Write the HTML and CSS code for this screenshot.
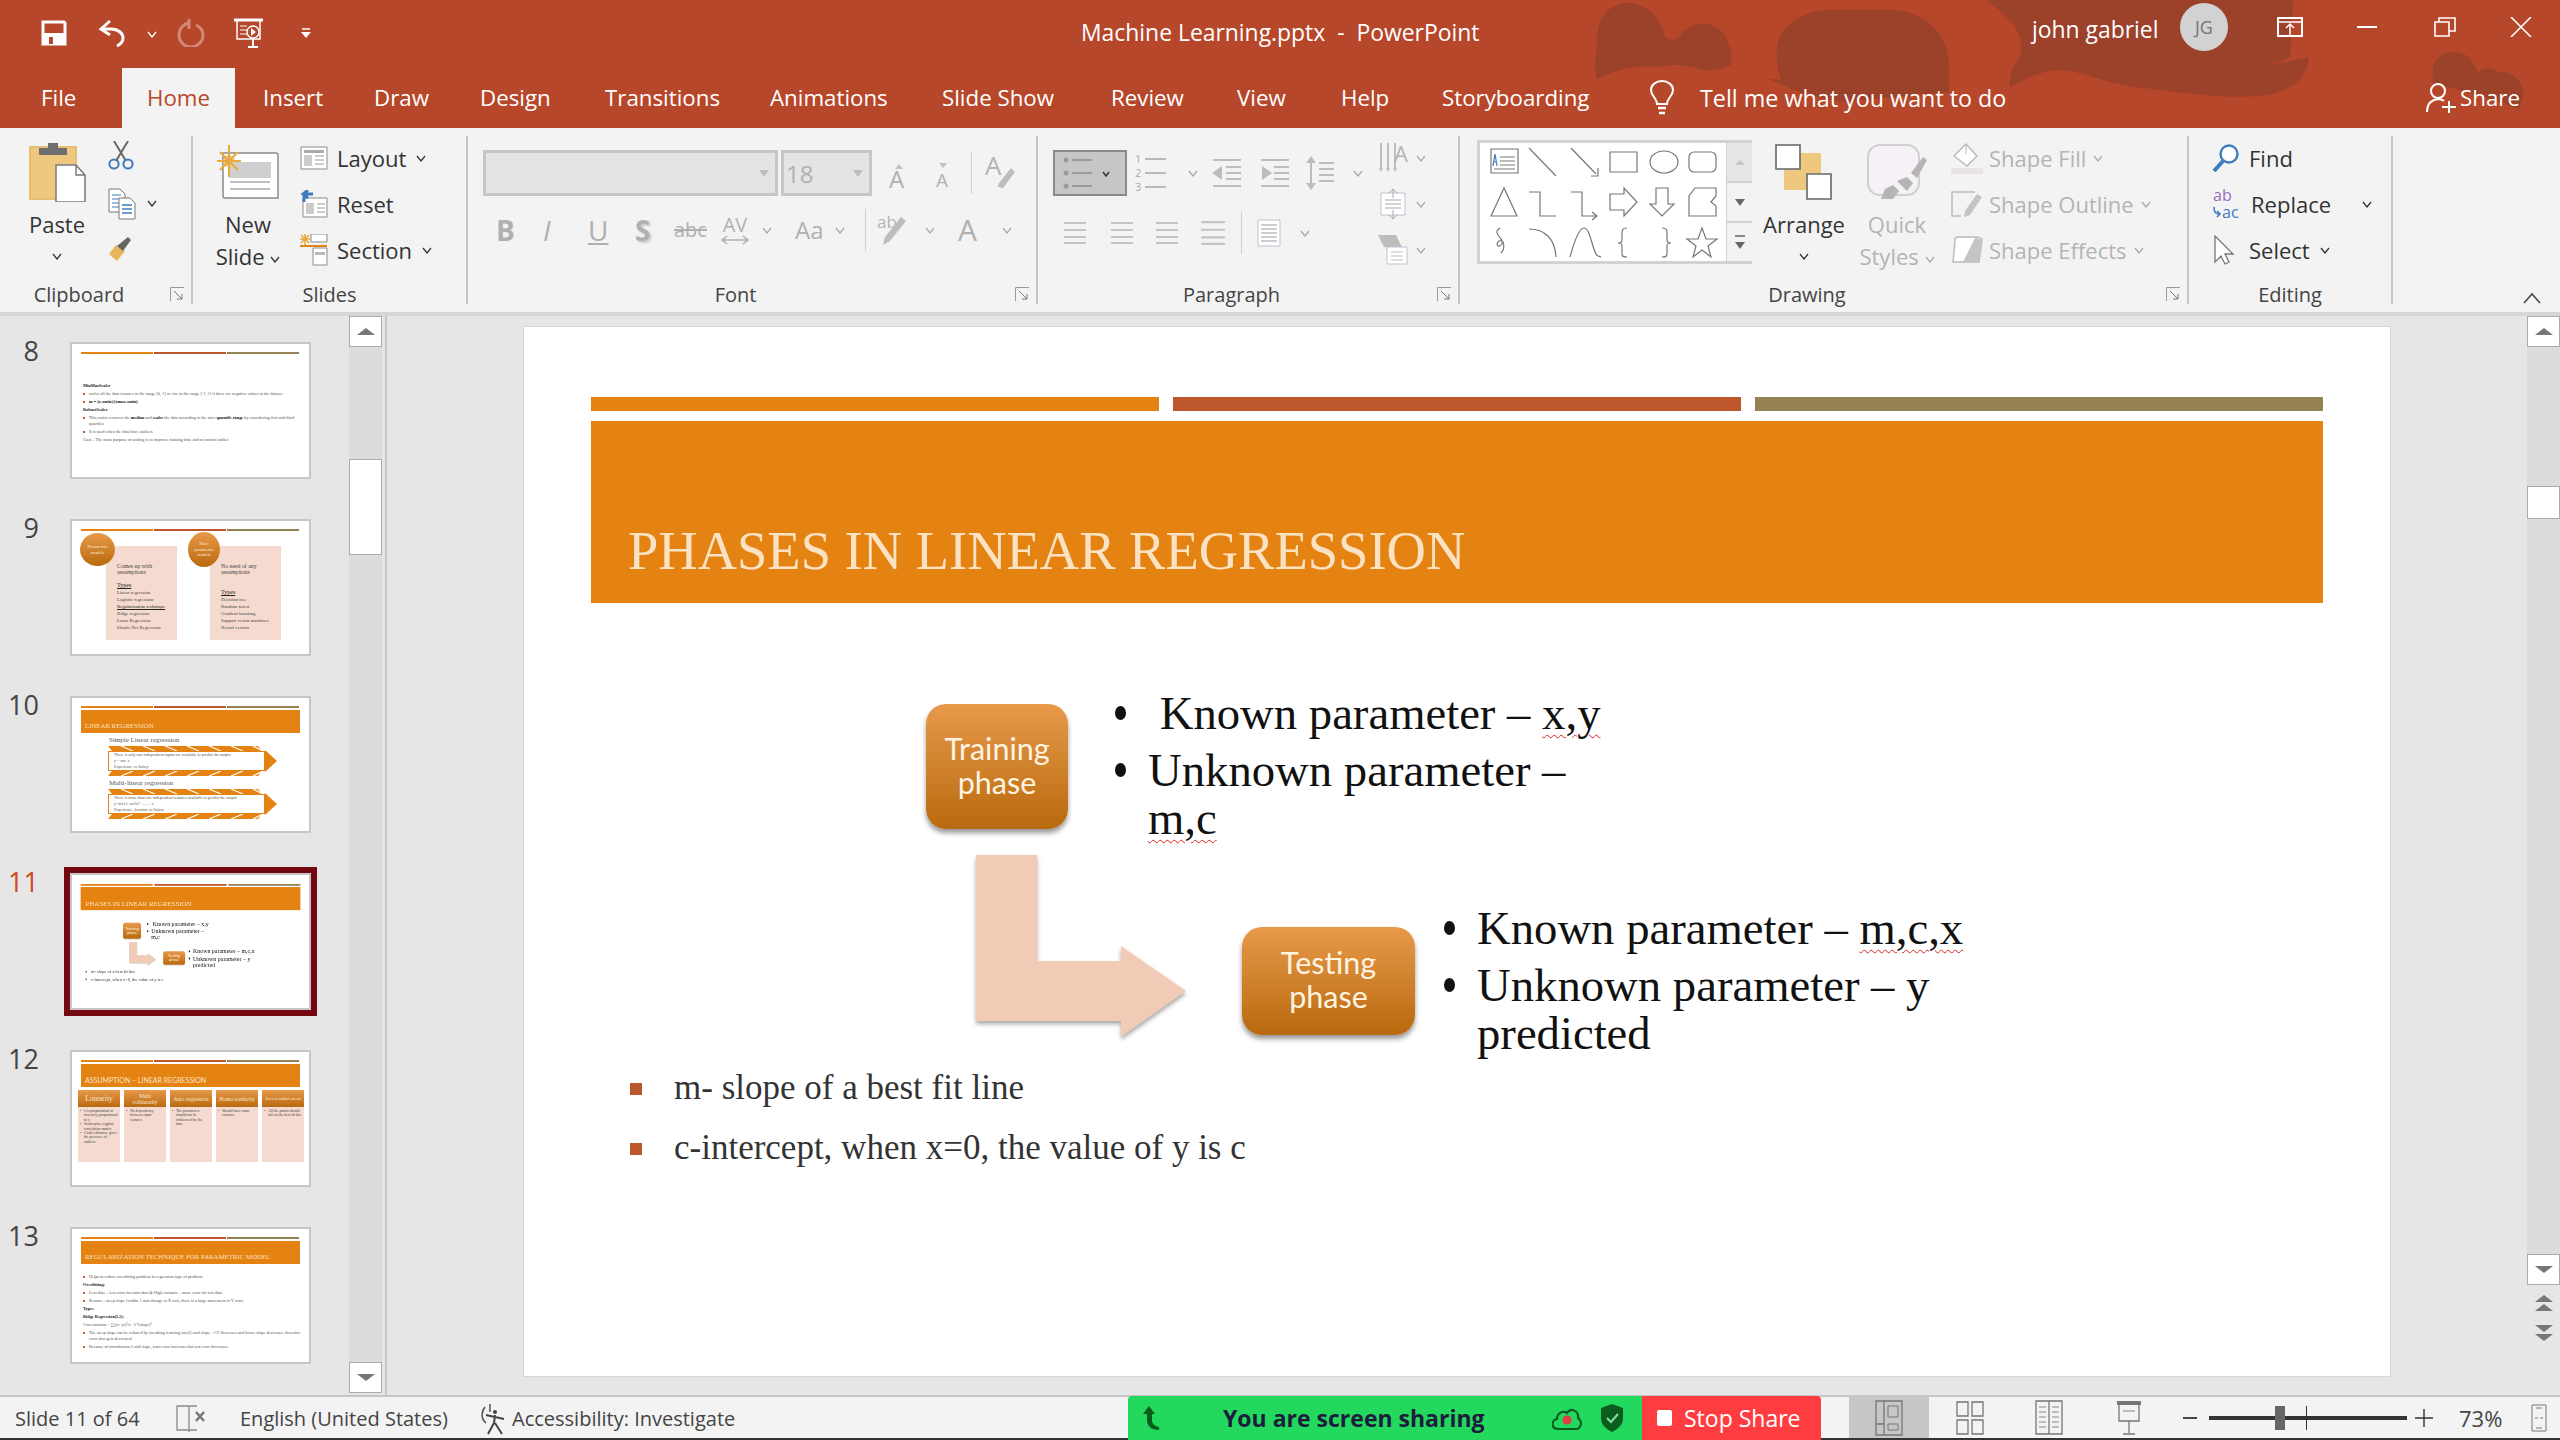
FILE: index.html
```html
<!DOCTYPE html>
<html lang="en">
<head>
<meta charset="utf-8">
<title>Machine Learning.pptx - PowerPoint</title>
<link rel="stylesheet" href="styles.css">
</head>
<body>
<svg class="sprite" width="0" height="0">
  <symbol id="chev" viewBox="0 0 10 7"><path d="M1 1l4 5 4-5" fill="none" stroke="currentColor" stroke-width="1.3"/></symbol>
  <symbol id="launch" viewBox="0 0 15 15"><path d="M.5 14V.5H14" fill="none" stroke="#9a9a9a"/><path d="M4 4l8 8M12 7v5H7" fill="none" stroke="#777"/></symbol>
  <symbol id="band" viewBox="0 0 170 30"><path d="M1 0h150l4 5h3v-1l12 11-12 11v-1h-3l-4 5H1l4-5v-4L1 15l4-4V5z" fill="#e48312"/><path d="M14 0l12 5M36 0l12 5M58 0l12 5M80 0l12 5M102 0l12 5M124 0l12 5M146 0l10 5M14 30l12-5M36 30l12-5M58 30l12-5M80 30l12-5M102 30l12-5M124 30l12-5M146 30l10-5" stroke="#fff" stroke-width="1.2"/></symbol>
  <symbol id="lines" viewBox="0 0 24 22"><path d="M1 1h22M1 8h22M1 15h22M1 21h22" stroke="#c4c4c4" stroke-width="2"/></symbol>
</svg>

<div class="app">
  <header class="head">
    <svg class="blobs" viewBox="0 0 2560 128" width="2560" height="128">
      <path d="M1597 40c0-24 14-38 32-37 20 1 34 18 36 34 6 4 10 4 14 0 6-10 20-16 32-12 16 6 22 22 20 40-10 4-22 8-32 4-20-6-30-4-40-2-16-2-36 0-62 12-4-12 0-26 0-39z"/>
      <path d="M1777 60c-4-30 20-48 50-50h62c36 0 60 24 60 56l0 26c-30 2-60 6-106 10-36-6-60-16-76-24l14 2c-2-6-4-14-4-20z"/>
      <path d="M1987 0h306l-3 57c-26 12-56 14-80 10 34 4 70-4 99-10-2 20-14 32-41 38-50 6-90-4-134-8-40-6-60-22-89-15-16 4-26 10-35 16-2-10 2-20 10-32 6-16-6-32-11-36-6-8-14-12-22-20z"/>
      <path d="M2434 84c-4-16 0-32 22-32 12 0 18 12 22 20 6-6 14-4 20 0 8-2 22 4 25 18 1 6-2 14-4 19-30-12-54-18-85-25z"/>
    </svg>
    <div class="titlebar">
      <div class="qat">
        <svg width="26" height="26" viewBox="0 0 26 26"><path d="M2 2h21l1 1v21H2z" fill="none" stroke="#fff" stroke-width="3"/><path d="M2 13h22v12H2z" fill="#fff"/><path d="M8 17h4v7H8z" fill="#b7472a"/></svg>
        <svg width="28" height="28" viewBox="0 0 28 28"><path d="M12 2L3 10l9 6" fill="none" stroke="#fff" stroke-width="3"/><path d="M3 10h10c8 0 12 5 12 9 0 4-2 6-6 8" fill="none" stroke="#fff" stroke-width="3"/></svg>
        <svg class="qchev" width="10" height="7"><use href="#chev"/></svg>
        <svg class="dim" width="28" height="28" viewBox="0 0 28 28"><path d="M19 6c4 2 7 5 7 10a12 12 0 1 1-24 0c0-6 4-11 10-12" fill="none" stroke="#fff" stroke-width="3"/><path d="M12 0v10" stroke="#fff" stroke-width="3"/></svg>
        <svg width="32" height="30" viewBox="0 0 32 30"><path d="M1 2h29" stroke="#fff" stroke-width="3"/><path d="M4 3v18h23V3" fill="none" stroke="#fff" stroke-width="1.5"/><path d="M7 8h7M7 12h7M7 16h7" stroke="#fff"/><circle cx="20" cy="14" r="6" fill="none" stroke="#fff" stroke-width="1.5"/><path d="M18 10l5 4-5 4z" fill="#fff"/><path d="M15 29h10M20 21v8" stroke="#fff" stroke-width="2"/></svg>
        <svg width="10" height="10" viewBox="0 0 10 10"><path d="M1 1h8" stroke="#fff" stroke-width="1.5"/><path d="M0 4h10L5 10z" fill="#fff"/></svg>
      </div>
      <div class="doc-title">Machine Learning.pptx &nbsp;-&nbsp; PowerPoint</div>
      <div class="user">john gabriel</div>
      <div class="avatar">JG</div>
      <div class="winctl">
        <svg width="26" height="20" viewBox="0 0 26 20"><path d="M1 1h24v18H1z" fill="none" stroke="#fff" stroke-width="2"/><path d="M1 5h24M13 18V8M9 11l4-4 4 4" fill="none" stroke="#fff" stroke-width="1.5"/></svg>
        <svg width="20" height="2" viewBox="0 0 20 2"><path d="M0 1h20" stroke="#fff" stroke-width="2"/></svg>
        <svg width="22" height="20" viewBox="0 0 22 20"><path d="M1 5h14v14H1zM5 5V1h16v13h-6" fill="none" stroke="#fff" stroke-width="1.6"/></svg>
        <svg width="22" height="20" viewBox="0 0 22 20"><path d="M1 0l20 20M21 0L1 20" stroke="#fff" stroke-width="1.6"/></svg>
      </div>
    </div>
    <nav class="tabs">
      <div class="tab tab-file">File</div>
      <div class="tab tab-home">Home</div>
      <div class="tab">Insert</div>
      <div class="tab">Draw</div>
      <div class="tab">Design</div>
      <div class="tab">Transitions</div>
      <div class="tab">Animations</div>
      <div class="tab">Slide Show</div>
      <div class="tab">Review</div>
      <div class="tab">View</div>
      <div class="tab">Help</div>
      <div class="tab">Storyboarding</div>
      <div class="tell">
        <svg width="26" height="36" viewBox="0 0 26 36"><path d="M8 24c0-6-6-8-6-14a11 9 0 0 1 22 0c0 6-6 8-6 14z" fill="none" stroke="#fff" stroke-width="2"/><path d="M9 28h8M10 33h6" stroke="#fff" stroke-width="2.4"/></svg>
        <span>Tell me what you want to do</span>
      </div>
      <div class="share">
        <svg width="32" height="32" viewBox="0 0 32 32"><circle cx="12" cy="9" r="7" fill="none" stroke="#fff" stroke-width="2"/><path d="M1 30c0-8 4-12 11-13 3 0 5 1 6 2" fill="none" stroke="#fff" stroke-width="2"/><path d="M23 19v12M16 25h14" stroke="#fff" stroke-width="2"/></svg>
        <span>Share</span>
      </div>
    </nav>
  </header>

  <section class="ribbon">
    <div class="group g-clip">
      <div class="gbody">
        <div class="big b-paste">
          <div class="big-icon">
            <svg width="58" height="60" viewBox="0 0 58 60"><path d="M2 5h46v52H2z" fill="#edc87e" stroke="#e8bf70" stroke-width="2" stroke-linejoin="round"/><path d="M11 13V6h9V1h10v5h9v7z" fill="#6e6e6e"/><path d="M28 23h20l9 10v27H28z" fill="#fff" stroke="#7a7a7a" stroke-width="1.5"/><path d="M48 23v10h9" fill="none" stroke="#7a7a7a" stroke-width="1.5"/></svg>
          </div>
          <div class="big-label">Paste</div>
          <svg class="big-chev" width="10" height="7"><use href="#chev"/></svg>
        </div>
        <div class="clip-side">
          <svg width="26" height="29" viewBox="0 0 26 29"><path d="M6 0l12 20M20 0L8 20" stroke="#666" stroke-width="2"/><circle cx="6" cy="23" r="4.6" fill="none" stroke="#3f7cbe" stroke-width="2"/><circle cx="20" cy="23" r="4.6" fill="none" stroke="#3f7cbe" stroke-width="2"/></svg>
          <div class="copy-row">
            <svg width="28" height="32" viewBox="0 0 28 32"><path d="M1 1h11l5 5v18H1z" fill="#fff" stroke="#777"/><path d="M4 7h9M4 11h9M4 15h9M4 19h9" stroke="#3f7cbe"/><path d="M11 10h11l5 5v16H11z" fill="#fff" stroke="#777"/><path d="M14 17h10M14 21h10M14 25h10" stroke="#3f7cbe" stroke-width="1.5"/></svg>
            <svg class="ch" width="10" height="7"><use href="#chev"/></svg>
          </div>
          <svg width="26" height="24" viewBox="0 0 26 24"><path d="M8 8L1 17l8 7 8-10z" fill="#e7b75c"/><path d="M9 9l6 5 8-11-3-3z" fill="#666"/></svg>
        </div>
      </div>
      <div class="glabel">Clipboard<svg class="launcher" width="15" height="15"><use href="#launch"/></svg></div>
    </div>

    <div class="group g-slides">
      <div class="gbody">
        <div class="big b-new">
          <div class="big-icon">
            <svg width="62" height="56" viewBox="0 0 62 56"><path d="M6 9h53q2 0 2 2v43H8q-2 0-2-2z" fill="#fff" stroke="#8b8b8b" stroke-width="1.5"/><path d="M12 18h42v16H12z" fill="#cfcfcf"/><path d="M13 38h40M13 45h40" stroke="#aaa" stroke-width="1.5"/><circle cx="12" cy="17" r="6" fill="#edc87e"/><path d="M12 1v32M0 17h24M3 8l18 18M21 8L3 26" stroke="#e9a93f" stroke-width="2"/></svg>
          </div>
          <div class="big-label">New</div>
          <div class="big-label">Slide <svg class="ch" width="10" height="7"><use href="#chev"/></svg></div>
        </div>
        <div class="stack">
          <div class="srow">
            <svg class="sic" width="28" height="24" viewBox="0 0 28 24"><path d="M1 1h26v22H1z" fill="#fff" stroke="#8b8b8b"/><path d="M4 4h20v3H4z" fill="#aaa"/><path d="M4 9h8v11H4z" fill="#ccc"/><path d="M15 10h9M15 14h9M15 18h9" stroke="#999"/></svg>
            <span>Layout</span><svg class="ch" width="10" height="7"><use href="#chev"/></svg>
          </div>
          <div class="srow">
            <svg class="sic" width="28" height="28" viewBox="0 0 28 28"><path d="M3 8h24v19H3z" fill="#fff" stroke="#8b8b8b"/><path d="M6 13h8v11H6z" fill="#ccc"/><path d="M17 14h8M17 18h8M17 22h8" stroke="#999"/><path d="M4 12V4h9M8 0L3 4l5 4" fill="none" stroke="#3f7cbe" stroke-width="3"/></svg>
            <span>Reset</span>
          </div>
          <div class="srow">
            <svg class="sic" width="28" height="32" viewBox="0 0 28 32"><path d="M11 0h16v8H11z" fill="#fff" stroke="#8b8b8b"/><path d="M0 12h27" stroke="#e48312" stroke-width="2"/><path d="M13 14h14v17H13z" fill="#fff" stroke="#8b8b8b"/><path d="M15 18h10v3H15z" fill="#bbb"/><path d="M5 0v11M0 5h10M1 1l8 8M9 1L1 9" stroke="#e9a93f" stroke-width="1.5"/></svg>
            <span>Section</span><svg class="ch" width="10" height="7"><use href="#chev"/></svg>
          </div>
        </div>
      </div>
      <div class="glabel">Slides</div>
    </div>

    <div class="group g-font">
      <div class="gbody col">
        <div class="font-r1">
          <div class="combo combo-font"><svg width="10" height="7" viewBox="0 0 10 7"><path d="M0 0h10L5 7z" fill="#bdbdbd"/></svg></div>
          <div class="combo combo-size"><span>18</span><svg width="10" height="7" viewBox="0 0 10 7"><path d="M0 0h10L5 7z" fill="#bdbdbd"/></svg></div>
          <div class="fic fgrow"><i class="tri-up"></i>A</div>
          <div class="fic fshrink"><i class="tri-dn"></i>A</div>
          <i class="vdiv"></i>
          <svg width="30" height="36" viewBox="0 0 30 36"><text class="svgdis" x="0" y="20">A</text><path d="M14 28l12-15 4 4-12 16-5-1z" fill="#bdbdbd"/></svg>
        </div>
        <div class="font-r2">
          <b class="fg">B</b><i class="fg fi">I</i><u class="fg">U</u><b class="fg fs">S</b>
          <s class="fg fabc">abc</s>
          <span class="fav"><span>AV</span><svg width="28" height="10" viewBox="0 0 28 10"><path d="M1 5h26M6 1L1 5l5 4M22 1l5 4-5 4" fill="none" stroke="#b0b0b0" stroke-width="1.5"/></svg></span>
          <svg class="ch dis" width="10" height="7"><use href="#chev"/></svg>
          <span class="fg faa">Aa</span>
          <svg class="ch dis" width="10" height="7"><use href="#chev"/></svg>
          <i class="vdiv tall"></i>
          <svg width="32" height="34" viewBox="0 0 32 34"><text class="svgdis2" x="0" y="15">ab</text><path d="M6 32l2-8 16-20 5 4-16 20z" fill="#bdbdbd"/></svg>
          <svg class="ch dis" width="10" height="7"><use href="#chev"/></svg>
          <span class="fg fa">A</span>
          <svg class="ch dis" width="10" height="7"><use href="#chev"/></svg>
        </div>
      </div>
      <div class="glabel">Font<svg class="launcher" width="15" height="15"><use href="#launch"/></svg></div>
    </div>

    <div class="group g-para">
      <div class="gbody">
        <div class="para-left">
          <div class="para-r1">
            <div class="bullets-btn"><svg width="50" height="36" viewBox="0 0 50 36"><g stroke="#9a9a9a" stroke-width="2"><path d="M9 4h20M9 17h20M9 30h20"/></g><g fill="#9a9a9a"><circle cx="3" cy="4" r="2.5"/><circle cx="3" cy="17" r="2.5"/><circle cx="3" cy="30" r="2.5"/></g><path d="M40 16l3 4 3-4" fill="none" stroke="#333" stroke-width="1.5"/></svg></div>
            <svg width="32" height="36" viewBox="0 0 32 36"><g stroke="#b8b8b8" stroke-width="2"><path d="M10 4h21M10 18h21M10 32h21"/></g><text class="svgnum" x="0" y="8">1</text><text class="svgnum" x="0" y="22">2</text><text class="svgnum" x="0" y="36">3</text></svg>
            <svg class="ch dis" width="10" height="7"><use href="#chev"/></svg>
            <svg width="30" height="28" viewBox="0 0 30 28"><path d="M1 1h28M14 8h15M14 14h15M14 20h15M1 27h28" stroke="#bdbdbd" stroke-width="2"/><path d="M0 14l10-7v14z" fill="#bdbdbd"/></svg>
            <svg width="30" height="28" viewBox="0 0 30 28"><path d="M1 1h28M14 8h15M14 14h15M14 20h15M1 27h28" stroke="#bdbdbd" stroke-width="2"/><path d="M12 14L2 7v14z" fill="#bdbdbd"/></svg>
            <svg width="28" height="36" viewBox="0 0 28 36"><path d="M13 8h15M13 14h15M13 20h15M13 26h15" stroke="#bdbdbd" stroke-width="2"/><path d="M5 2v32" stroke="#bdbdbd" stroke-width="2"/><path d="M0 8l5-7 5 7zM0 28l5 7 5-7z" fill="#bdbdbd"/></svg>
            <svg class="ch dis" width="10" height="7"><use href="#chev"/></svg>
          </div>
          <div class="para-r2">
            <svg width="24" height="24"><use href="#lines"/></svg>
            <svg width="24" height="24"><use href="#lines"/></svg>
            <svg width="24" height="24"><use href="#lines"/></svg>
            <svg width="26" height="24"><use href="#lines"/></svg>
            <i class="vdiv tall"></i>
            <svg width="24" height="28" viewBox="0 0 24 28"><path d="M1 1h22v26H1z" fill="#fff" stroke="#c9bcd0"/><path d="M4 6h16M4 10h16M4 14h16M4 18h16M4 22h16" stroke="#bdbdbd" stroke-width="1.5"/></svg>
            <svg class="ch dis" width="10" height="7"><use href="#chev"/></svg>
          </div>
        </div>
        <div class="stack para-stack">
          <div class="srow"><svg class="sic" width="30" height="32" viewBox="0 0 30 32"><path d="M3 1v26M10 1v26M17 1v26" stroke="#bdbdbd" stroke-width="2"/><path d="M1 26l2 4 2-4M8 26l2 4 2-4M15 26l2 4 2-4" fill="#bdbdbd"/><text class="svgdis3" x="16" y="20">A</text></svg><svg class="ch dis" width="10" height="7"><use href="#chev"/></svg></div>
          <div class="srow"><svg class="sic" width="30" height="32" viewBox="0 0 30 32"><path d="M3 5h24v22H3z" fill="#fff" stroke="#c9bcd0"/><path d="M7 12h16M7 16h16M7 20h16" stroke="#c4c4c4" stroke-width="1.5"/><path d="M15 1v9M15 22v9M11 5l4-4 4 4M11 27l4 4 4-4" fill="none" stroke="#aaa"/></svg><svg class="ch dis" width="10" height="7"><use href="#chev"/></svg></div>
          <div class="srow"><svg class="sic" width="30" height="30" viewBox="0 0 30 30"><path d="M0 0h18l6 12H6z" fill="#bdbdbd"/><path d="M9 12h20v17H9z" fill="#fff" stroke="#c9bcd0"/><path d="M13 17h12M13 21h12M13 25h12" stroke="#bdbdbd"/></svg><svg class="ch dis" width="10" height="7"><use href="#chev"/></svg></div>
        </div>
      </div>
      <div class="glabel">Paragraph<svg class="launcher" width="15" height="15"><use href="#launch"/></svg></div>
    </div>

    <div class="group g-draw">
      <div class="gbody">
        <div class="gallery">
          <svg width="246" height="118" viewBox="0 3 246 118">
            <g fill="none" stroke="#777" stroke-width="1.2">
              <path d="M11 9h27v24H11z"/><path d="M20 25h15M14 29h21M20 21h15M20 17h15"/>
              <path d="M49 8l27 28M91 8l25 26"/><path d="M118 28v8h-7"/>
              <path d="M130 12h27v20h-27z"/><ellipse cx="184" cy="22" rx="14" ry="11"/><rect x="209" y="12" width="27" height="20" rx="5"/>
              <path d="M11 76l13-28 13 28z"/>
              <path d="M49 52h11v24h16"/><path d="M91 52h11v24h14M112 72l5 4-5 4"/>
              <path d="M130 54h14v-6l13 14-13 14v-6h-14z"/>
              <path d="M176 48h12v16h6l-12 12-12-12h6z"/>
              <path d="M209 76V56l6-8h21v8l-5 6 5 4v10z"/>
              <path d="M20 88c-9 6 5 10 2 16-4 5-7 0-3-3 6-2 6 8 2 12"/>
              <path d="M49 89c16 0 26 10 27 28"/><path d="M90 117c6-22 10-29 14-29s6 8 9 18 4 10 8 11"/>
              <path d="M147 88c-5 0-5 2-5 6v6c0 2-1 3-4 3 3 0 4 1 4 3v6c0 4 0 5 5 5"/>
              <path d="M182 88c5 0 5 2 5 6v6c0 2 1 3 4 3-3 0-4 1-4 3v6c0 4 0 5-5 5"/>
              <path d="M222 88l4 11h11l-9 7 3 11-9-7-9 7 3-11-9-7h11z"/>
            </g>
            <path d="M13 26l2-12 2 12M14 22h2" stroke="#3f7cbe" fill="none" stroke-width="1.2"/>
          </svg>
          <div class="gal-scroll">
            <div class="gal-btn gal-off"><i class="tri-up big-tri"></i></div>
            <div class="gal-btn"><i class="tri-dn big-tri dark"></i></div>
            <div class="gal-btn gal-more"><i class="gal-dash"></i><i class="tri-dn big-tri dark"></i></div>
          </div>
        </div>
        <div class="big b-arrange">
          <div class="big-icon">
            <svg width="58" height="56" viewBox="0 0 58 56"><path d="M24 9h22v20H24zM9 25h23v21H9z" fill="#edc87e"/><path d="M1 1h24v24H1z" fill="#fff" stroke="#666" stroke-width="1.6"/><path d="M32 30h24v25H32z" fill="#fff" stroke="#666" stroke-width="1.6"/></svg>
          </div>
          <div class="big-label">Arrange</div>
          <svg class="big-chev" width="10" height="7"><use href="#chev"/></svg>
        </div>
        <div class="big b-quick">
          <div class="big-icon">
            <svg width="60" height="58" viewBox="0 0 60 58"><rect x="1" y="2" width="51" height="50" rx="12" fill="#f6f1f6" stroke="#cfcfcf" stroke-width="2"/><path d="M44 30l12-16 4 3-10 18zM30 38l10-4 6 6-6 8z" fill="#b5b5b5"/><path d="M14 56l4-10 8-4 6 6-6 8z" fill="#b5b5b5"/></svg>
          </div>
          <div class="big-label dis-t">Quick</div>
          <div class="big-label dis-t">Styles <svg class="ch dis" width="10" height="7"><use href="#chev"/></svg></div>
        </div>
        <div class="stack draw-stack">
          <div class="srow dis-t"><svg class="sic" width="32" height="32" viewBox="0 0 32 32"><path d="M15 2L3 14l13 10 10-10z" fill="#fff" stroke="#bbb" stroke-width="1.5"/><path d="M15 2v10" stroke="#bbb"/><path d="M0 26h32v6H0z" fill="#e7e3e7"/></svg><span>Shape Fill</span><svg class="ch dis" width="10" height="7"><use href="#chev"/></svg></div>
          <div class="srow dis-t"><svg class="sic" width="32" height="26" viewBox="0 0 32 26"><path d="M24 1H1v24h9" fill="none" stroke="#bbb" stroke-width="1.5"/><path d="M14 20L26 3l5 3-12 18-6 2z" fill="#c4c4c4"/></svg><span>Shape Outline</span><svg class="ch dis" width="10" height="7"><use href="#chev"/></svg></div>
          <div class="srow dis-t"><svg class="sic" width="32" height="28" viewBox="0 0 32 28"><path d="M4 4q0-3 3-3h16q8 0 8 3l-3 22H2z" fill="#fff" stroke="#bbb" stroke-width="1.5"/><path d="M24 2q7 1 7 3l-3 21H12z" fill="#c4c4c4"/></svg><span>Shape Effects</span><svg class="ch dis" width="10" height="7"><use href="#chev"/></svg></div>
        </div>
      </div>
      <div class="glabel">Drawing<svg class="launcher" width="15" height="15"><use href="#launch"/></svg></div>
    </div>

    <div class="group g-edit">
      <div class="gbody">
        <div class="stack edit-stack">
          <div class="srow"><svg class="sic" width="28" height="28" viewBox="0 0 28 28"><circle cx="17" cy="10" r="8.500" fill="#fff" stroke="#3f7cbe" stroke-width="2.4"/><path d="M11 17L2 27" stroke="#3f7cbe" stroke-width="4"/></svg><span>Find</span></div>
          <div class="srow"><svg class="sic" width="30" height="30" viewBox="0 0 30 30"><text class="svgab" x="1" y="12">ab</text><text class="svgac" x="10" y="29">ac</text><path d="M2 18c0 6 2 7 6 7M5 22l3 3-3 3" fill="none" stroke="#3f7cbe" stroke-width="1.600"/></svg><span>Replace</span><svg class="ch rep-ch" width="10" height="7"><use href="#chev"/></svg></div>
          <div class="srow"><svg class="sic" width="28" height="30" viewBox="0 0 28 30"><path d="M3 1v26l6-6 4 8 4-2-4-8h8z" fill="#fff" stroke="#777" stroke-width="1.300"/></svg><span>Select</span><svg class="ch" width="10" height="7"><use href="#chev"/></svg></div>
        </div>
      </div>
      <div class="glabel">Editing</div>
    </div>
    <svg class="collapse" width="20" height="12" viewBox="0 0 20 12"><path d="M2 11l8-9 8 9" fill="none" stroke="#444" stroke-width="1.500"/></svg>
  </section>

  <main class="main">
    <aside class="pane">
      <div class="thumbs">
        <div class="trow"><div class="tnum">8</div>
          <div class="thumb">
            <div class="tbars"><i class="o"></i><i class="r"></i><i class="k"></i></div>
            <div class="ttext tt8">
              <p class="b">MinMaxScaler</p>
              <p class="li">scales all the data features in the range [0, 1] or else in the range [-1, 1] if there are negative values in the dataset</p>
              <p class="li b">m = (x-xmin)/(xmax-xmin)</p>
              <p class="b">RobustScaler</p>
              <p class="li wrap">This scaler removes the <b>median</b> and <b>scales</b> the data according to the inter <b>quantile range</b> by considering first and third quartiles</p>
              <p class="li">It is used when the data have outliers</p>
              <p>Goal – The main purpose of scaling is to improve training time and to control outlier</p>
            </div>
          </div>
        </div>
        <div class="trow"><div class="tnum">9</div>
          <div class="thumb th9">
            <div class="tbars"><i class="o"></i><i class="r"></i><i class="k"></i></div>
            <div class="pbox pb1"><p class="gap1">Comes up with assumptions</p><p class="ty">Types</p><p>Linear regression</p><p>Logistic regression</p><p class="reg">Regularization technique</p><p>Ridge regression</p><p>Lasso Regression</p><p>Elastic Net Regression</p></div>
            <div class="pbox pb2"><p class="gap2">No need of any assumptions</p><p class="ty">Types</p><p>Decision tree</p><p>Random forest</p><p>Gradient boosting</p><p>Support vector machines</p><p>Neural vectors</p></div>
            <div class="circ c1">Parametric models</div>
            <div class="circ c2">Non-parametric models</div>
          </div>
        </div>
        <div class="trow"><div class="tnum">10</div>
          <div class="thumb">
            <div class="tbars"><i class="o"></i><i class="r"></i><i class="k"></i></div>
            <div class="thead"><span>LINEAR REGRESSION</span></div>
            <div class="tt10">
              <p class="tt10h">Simple Linear regression</p>
              <div class="bandwrap"><svg class="bandsvg" width="170" height="30"><use href="#band"/></svg><div class="bandbox"><p>There is only one independent inputs are available to predict the output</p><p>y = mx+c</p><p>Experience vs Salary</p></div></div>
              <p class="tt10h">Multi-linear regression</p>
              <div class="bandwrap"><svg class="bandsvg" width="170" height="30"><use href="#band"/></svg><div class="bandbox"><p>There is more than one independent features available to predict the output</p><p>y=m1x1+m2x2+……+c</p><p>Experience, location vs Salary</p></div></div>
            </div>
          </div>
        </div>
        <div class="trow"><div class="tnum tnum-cur">11</div>
          <div class="thumb cur">
            <div class="mini">
              <div class="s-bars"><i class="o"></i><i class="r"></i><i class="k"></i></div>
              <div class="s-head"><h1>PHASES IN LINEAR REGRESSION</h1></div>
              <div class="pbtn p-train">Training phase</div>
              <ul class="blist bl1"><li>&nbsp;Known parameter – <span class="sq">x,y</span></li><li>Unknown parameter –<br><span class="sq">m,c</span></li></ul>
              <svg class="barrow" width="212" height="184" viewBox="0 0 212 184"><path d="M0 0h61v106h84V91l65 45-65 46v-16H0z" fill="#f2cbb7"/></svg>
              <div class="pbtn p-test">Testing phase</div>
              <ul class="blist bl2"><li>Known parameter – <span class="sq">m,c,x</span></li><li>Unknown parameter – y<br>predicted</li></ul>
              <ul class="slist"><li>m- slope of a best fit line</li><li>c-intercept, when x=0, the value of y is c</li></ul>
            </div>
          </div>
        </div>
        <div class="trow"><div class="tnum">12</div>
          <div class="thumb">
            <div class="tbars"><i class="o"></i><i class="r"></i><i class="k"></i></div>
            <div class="thead thead-sans"><span>ASSUMPTION – LINEAR REGRESSION</span></div>
            <div class="acols">
              <div class="acol"><div class="ah ah-lg">Linearity</div><ul><li>x is proportional or inversely proportional to y</li><li>Scatterplot, regplot, correlation matrix</li><li>Cook's distance gives the presence of outliers</li></ul></div>
              <div class="acol"><div class="ah">Multi collinearity</div><ul><li>No dependency between input features</li></ul></div>
              <div class="acol"><div class="ah">Auto regression</div><ul><li>The parameters should not be influenced by the time</li></ul></div>
              <div class="acol"><div class="ah">Homo scedacity</div><ul><li>Should have same variance</li></ul></div>
              <div class="acol"><div class="ah ah-sm">Zero residual mean</div><ul><li>All the points should fall on the best fit line</li></ul></div>
            </div>
          </div>
        </div>
        <div class="trow"><div class="tnum">13</div>
          <div class="thumb">
            <div class="tbars"><i class="o"></i><i class="r"></i><i class="k"></i></div>
            <div class="thead"><span>REGULARIZATION TECHNIQUE FOR PARAMETRIC MODEL</span></div>
            <div class="ttext tt13">
              <p class="li">Helps to reduce overfitting problem in regression type of problem.</p>
              <p class="b">Overfitting:</p>
              <p class="li">Less bias – less error for train data &amp; High variance – more error for test data</p>
              <p class="li">Reason – steep slope (within 1 unit change in X axis, there is a huge movement in Y axis)</p>
              <p class="b">Types</p>
              <p class="b">Ridge Regression(L2):</p>
              <p>Cost function = ∑(yi- yi)²/n +λ*(slope)²</p>
              <p class="li wrap">The steep slope can be reduced by tweaking learning rate(λ) and slope – CF decreases and hence slope decreases. therefore error also gets decreased.</p>
              <p class="li">Because of introduction λ and slope, train error increases but test error decreases.</p>
            </div>
          </div>
        </div>
      </div>
      <div class="sbar sbar-left">
        <div class="sb-btn"><i class="sb-up"></i></div>
        <div class="sb-thumb st-left"></div>
        <div class="sb-fill"></div>
        <div class="sb-btn"><i class="sb-dn"></i></div>
      </div>
    </aside>

    <div class="work">
      <div class="canvas">
        <div class="slide">
          <div class="s-bars"><i class="o"></i><i class="r"></i><i class="k"></i></div>
          <div class="s-head"><h1>PHASES IN LINEAR REGRESSION</h1></div>
          <div class="pbtn p-train">Training phase</div>
          <ul class="blist bl1"><li>&nbsp;Known parameter – <span class="sq">x,y</span></li><li>Unknown parameter –<br><span class="sq">m,c</span></li></ul>
          <svg class="barrow" width="212" height="184" viewBox="0 0 212 184"><path d="M0 0h61v106h84V91l65 45-65 46v-16H0z" fill="#f2cbb7"/></svg>
          <div class="pbtn p-test">Testing phase</div>
          <ul class="blist bl2"><li>Known parameter – <span class="sq">m,c,x</span></li><li>Unknown parameter – y<br>predicted</li></ul>
          <ul class="slist"><li>m- slope of a best fit line</li><li>c-intercept, when x=0, the value of y is c</li></ul>
        </div>
      </div>
      <div class="sbar sbar-right">
        <div class="sb-btn"><i class="sb-up"></i></div>
        <div class="sb-thumb st-right"></div>
        <div class="sb-fill"></div>
        <div class="sb-btn"><i class="sb-dn"></i></div>
        <div class="sb-steps">
          <div class="sb-step"><i class="sb-up2"></i><i class="sb-up2"></i></div>
          <div class="sb-step"><i class="sb-dn2"></i><i class="sb-dn2"></i></div>
        </div>
      </div>
    </div>
  </main>

  <footer class="status">
    <div class="st-left-part">
      <span class="st-slide">Slide 11 of 64</span>
      <svg class="st-notes" width="30" height="28" viewBox="0 0 30 28"><path d="M1 1h12v24H1zM13 1h8M13 25h8M13 1v26" fill="none" stroke="#8a8a8a" stroke-width="1.300"/><path d="M20 7l8 9M28 7l-8 9" stroke="#777" stroke-width="2.500"/></svg>
      <span class="st-lang">English (United States)</span>
      <svg class="st-acc" width="30" height="32" viewBox="0 0 30 32"><path d="M10 1v8M5 4C1 9 1 16 6 20" fill="none" stroke="#555" stroke-width="1.500"/><circle cx="15" cy="9" r="2" fill="#444"/><path d="M6 12l18 4M15 12l-1 8-6 11M15 20l7 11" fill="none" stroke="#444" stroke-width="2"/></svg>
      <span class="st-acc-t">Accessibility: Investigate</span>
    </div>
    <div class="zoom-share">
      <svg class="zs-arrow" width="20" height="24" viewBox="0 0 20 24"><path d="M6 0l6 8H9v6c0 4 3 6 7 7v3c-8 0-12-4-12-10V8H0z" fill="#0b5d1e"/></svg>
      <span class="zs-text">You are screen sharing</span>
      <svg class="zs-cloud" width="30" height="26" viewBox="0 0 30 26"><path d="M6 24c-7 0-7-9-1-10 0-6 6-9 10-6 4-6 12-2 11 5 5 3 3 11-2 11z" fill="none" stroke="#0b5d1e" stroke-width="2.200"/><circle cx="15" cy="15" r="4.500" fill="#e63946"/></svg>
      <svg class="zs-shield" width="22" height="28" viewBox="0 0 22 28"><path d="M11 0l11 4v10c0 7-5 11-11 14C5 25 0 21 0 14V4z" fill="#0b5d1e"/><path d="M6 14l4 4 7-8" fill="none" stroke="#7fe0a0" stroke-width="2"/></svg>
    </div>
    <div class="zoom-stop"><i class="stop-sq"></i><span>Stop Share</span></div>
    <div class="view-btn view-cur"><svg width="28" height="36" viewBox="0 0 28 36"><path d="M1 1h26v34H1zM9 1v34M1 24h8" fill="none" stroke="#777" stroke-width="1.300"/><path d="M13 6h10v11H13zM13 24h10v6H13z" fill="none" stroke="#777"/></svg></div>
    <div class="view-btn vb2"><svg width="28" height="34" viewBox="0 0 28 34"><path d="M1 1h11v14H1zM16 1h11v14H16zM1 19h11v14H1zM16 19h11v14H16z" fill="none" stroke="#777" stroke-width="1.300"/></svg></div>
    <div class="view-btn vb3"><svg width="28" height="36" viewBox="0 0 28 36"><path d="M1 1h26v33H1zM14 1v33" fill="none" stroke="#777" stroke-width="1.300"/><path d="M4 7h7M4 12h7M4 17h7M4 22h7M4 27h7M17 7h7M17 12h7M17 17h7M17 22h7M17 27h7" stroke="#888"/></svg></div>
    <div class="view-btn vb4"><svg width="26" height="34" viewBox="0 0 26 34"><path d="M1 2h24" stroke="#777" stroke-width="4"/><path d="M3 4v16h20V4" fill="none" stroke="#777" stroke-width="1.300"/><path d="M7 10h12" stroke="#888"/><path d="M13 20v12M7 33h12" stroke="#777" stroke-width="1.300"/></svg></div>
    <div class="zoomer">
      <i class="zm-minus"></i>
      <div class="zm-track"><i class="zm-tick"></i><i class="zm-handle"></i></div>
      <svg width="18" height="18" viewBox="0 0 18 18"><path d="M0 9h18M9 0v18" stroke="#333" stroke-width="1.400"/></svg>
      <span class="zm-pct">73%</span>
      <svg class="zm-fit" width="16" height="28" viewBox="0 0 16 28"><path d="M1 1h14v26H1z" fill="none" stroke="#777"/><path d="M5 4h6M5 24h6M4 14h3M9 14h3" stroke="#777"/></svg>
    </div>
  </footer>
</div>
</body>
</html>
```

FILE: styles.css
```css
* { box-sizing: border-box; }
html, body { margin: 0; padding: 0; }
body { width: 2560px; height: 1440px; overflow: hidden; font-family: "Open Sans", "Noto Sans", sans-serif; color: #333; background: #e6e6e6; }
p, ul, h1 { margin: 0; padding: 0; }
ul { list-style: none; }
i { display: block; }
.sprite { position: absolute; }
.app { width: 2560px; height: 1440px; display: flex; flex-direction: column; }

/* header */
.head { height: 128px; background: #b7472a; color: #fff; position: relative; overflow: hidden; flex: none; }
.blobs { position: absolute; left: 0; top: 0; fill: #9c412a; }
.titlebar { height: 68px; position: relative; display: grid; grid-template-columns: 1081px 951px 148px 97px auto; align-items: start; font-size: 22px; }
.qat { padding: 12px 0 0 41px; display: grid; grid-template-columns: 57px 49px 30px 56px 68px 12px; align-items: center; justify-items: start; height: 54px; }
.qchev { color: #fff; margin-top: 2px; }
.dim { opacity: .35; }
.doc-title { line-height: 66px; white-space: nowrap; font-size: 22.900px; }
.user { line-height: 60px; white-space: nowrap; font-size: 22.900px; }
.avatar { width: 48px; height: 48px; margin-top: 3px; border-radius: 50%; background: #d2d2d2; color: #757575; font-size: 18px; display: flex; align-items: center; justify-content: center; }
.winctl { display: grid; grid-template-columns: 80px 77px 76px 22px; align-items: center; justify-items: start; height: 54px; }
.tabs { height: 60px; display: grid; grid-template-columns: 122px 113px 111px 106px 125px 165px 172px 169px 126px 104px 101px 207px 805px 134px; position: relative; font-size: 22.300px; line-height: 60px; white-space: nowrap; }
.tab { padding-left: 28px; }
.tab-file { padding-left: 41px; }
.tab-home { background: #f3f3f3; color: #b7472a; padding: 0; text-align: center; }
.tell { display: flex; align-items: center; padding-left: 28px; gap: 25px; font-size: 23.300px; }
.share { display: flex; align-items: center; gap: 2px; }

/* ribbon */
.ribbon { height: 188px; flex: none; background: #f3f3f3; border-bottom: 4px solid #d6d6d6; padding: 8px 0; display: flex; position: relative; font-size: 22px; color: #333; }
.group { height: 168px; display: flex; flex-direction: column; border-right: 2px solid #c6c6c6; position: relative; flex: none; }
.g-clip { width: 193px; }
.g-slides { width: 275px; }
.g-font { width: 570px; }
.g-para { width: 422px; }
.g-draw { width: 729px; }
.g-edit { width: 204px; }
.gbody { height: 140px; display: flex; }
.gbody.col { flex-direction: column; }
.glabel { height: 28px; padding-top: 8px; line-height: 22px; text-align: center; font-size: 20px; color: #444; white-space: nowrap; }
.g-clip .glabel, .g-font .glabel, .g-para .glabel, .g-draw .glabel { padding-right: 33px; }
.launcher { position: absolute; right: 6px; bottom: 2px; }
.big { display: flex; flex-direction: column; align-items: center; flex: none; }
.big-icon { height: 72px; display: flex; align-items: center; }
.big-label { line-height: 32px; height: 32px; font-size: 22px; white-space: nowrap; }
.big-chev { margin-top: 13px; color: #333; }
.b-paste { width: 120px; padding-right: 6px; }
.b-new { width: 114px; padding-right: 4px; }
.b-arrange { width: 90px; margin-left: 7px; }
.b-quick { width: 98px; padding-right: 2px; }
.ch { color: #333; display: inline-block; flex: none; vertical-align: middle; }
.ch.dis { color: #aaa; }
.dis-t, .dis-t span { color: #b4b4b4; }
.clip-side { display: flex; flex-direction: column; margin: 5px 0 0 -12px; height: 130px; justify-content: space-between; padding-bottom: 10px; }
.copy-row { display: flex; align-items: center; gap: 11px; }
.stack { display: flex; flex-direction: column; margin-top: -1px; }
.srow { height: 46px; display: flex; align-items: center; gap: 9px; white-space: nowrap; }
.sic { flex: none; }
.srow .ch { margin-left: 1px; }
.g-slides .stack { margin-left: -7px; }
.font-r1 { display: grid; grid-template-columns: 298px 108px 47px 35px 14px auto; margin: 14px 0 0 15px; height: 46px; align-items: center; }
.combo { height: 46px; background: #e4e4e4; border: 3px solid #c6c6c6; display: flex; align-items: center; justify-content: flex-end; padding-right: 6px; }
.combo-font { width: 295px; }
.combo-size { width: 91px; justify-content: space-between; padding-left: 2px; }
.combo-size span { color: #b0b0b0; font-size: 24px; }
.fic { position: relative; color: #b0b0b0; font-size: 24px; line-height: 28px; padding-top: 10px; }
.fshrink { font-size: 19px; }
.tri-up { width: 0; height: 0; border: 4px solid transparent; border-top: 0; border-bottom: 5px solid #c0c0c0; margin: 0 0 -4px 6px; }
.tri-dn { width: 0; height: 0; border: 4px solid transparent; border-bottom: 0; border-top: 5px solid #c0c0c0; margin: 0 0 -2px 3px; }
.vdiv { width: 1px; height: 42px; background: #cfcfcf; }
.vdiv.tall { height: 42px; }
.svgdis { font: 26px "Open Sans", sans-serif; fill: #b4b4b4; }
.svgdis2 { font: 17px "Open Sans", sans-serif; fill: #b4b4b4; }
.svgdis3 { font: 22px "Open Sans", sans-serif; fill: #b4b4b4; }
.svgnum { font: 11px "Open Sans", sans-serif; fill: #aaa; }
.svgab { font: 16px "Open Sans", sans-serif; fill: #9b6bc0; }
.svgac { font: 16px "Open Sans", sans-serif; fill: #3f7cbe; }
.font-r2 { display: grid; grid-template-columns: 47px 45px 47px 39px 47px 41px 33px 40px 30px 12px 48px 33px 44px auto; margin: 13px 0 0 28px; height: 34px; align-items: center; justify-items: start; }
.fg { color: #b0b0b0; font-size: 28px; line-height: 34px; font-family: "Open Sans", sans-serif; }
.fi { display: inline; font-style: italic; }
.fs { text-shadow: 2px 2px 2px #ccc; }
.fabc { font-size: 20px; }
.fav { display: flex; flex-direction: column; align-items: center; color: #b0b0b0; font-size: 20px; line-height: 20px; }
.faa { font-size: 24px; }
.fa { font-size: 30px; }
.para-left { width: 340px; flex: none; padding-top: 14px; }
.para-r1 { display: grid; grid-template-columns: 82px 53px 24px 48px 46px 47px auto; margin-left: 15px; height: 46px; align-items: center; justify-items: start; }
.bullets-btn { width: 74px; height: 46px; background: #c6c6c6; border: 2px solid #8a8a8a; padding: 4px 0 0 8px; }
.para-r2 { display: grid; grid-template-columns: 47px 45px 45px 41px 16px 43px auto; margin: 16px 0 0 25px; height: 34px; align-items: center; justify-items: start; }
.para-stack .srow { gap: 7px; }
.g-draw .gbody { padding-left: 17px; }
.gallery { width: 275px; height: 124px; margin-top: 4px; background: #fff; border: 3px solid #d2d2d2; display: flex; flex: none; }
.gallery svg { flex: none; }
.gal-scroll { width: 26px; flex: none; display: flex; flex-direction: column; border-left: 1px solid #d2d2d2; }
.gal-btn { flex: 1; background: #f3f3f3; border-bottom: 2px solid #d2d2d2; display: flex; flex-direction: column; align-items: center; justify-content: center; gap: 5px; }
.gal-btn:last-child { border-bottom: 0; }
.gal-off { background: #e6e6e6; }
.gal-dash { width: 10px; height: 2px; background: #888; }
.big-tri { margin: 0; border-width: 5px; border-top-width: 0; border-bottom-color: #c6c6c6; }
.tri-dn.big-tri { border-top-width: 7px; border-bottom-width: 0; border-top-color: #666; }
.draw-stack { margin-left: 4px; }
.draw-stack .srow { gap: 6px; }
.edit-stack { margin-left: 23px; }
.rep-ch { margin-left: 22px !important; }
.collapse { position: absolute; right: 18px; top: 164px; }

/* main */
.main { flex: 1; display: flex; min-height: 0; }
.pane { width: 387px; flex: none; display: flex; background: #e6e6e6; border-right: 2px solid #c6c6c6; }
.thumbs { width: 349px; flex: none; padding-top: 26px; overflow: hidden; }
.trow { height: 177px; display: flex; }
.tnum { width: 39px; text-align: right; font-size: 27px; line-height: 30px; color: #444; flex: none; font-family: "Open Sans", sans-serif; margin-top: -6px; height: 30px; }
.tnum-cur { color: #d24726; }
.thumb { margin-left: 31px; width: 241px; height: 137px; background: #fff; border: 2px solid #c6c6c6; position: relative; font-family: "Liberation Serif", serif; color: #555; overflow: hidden; flex: none; }
.thumb.cur { outline: 6px solid #740811; overflow: visible; }
.mini { width: 1868px; height: 1051px; transform: scale(.1269); transform-origin: 0 0; position: relative; }
.tbars { display: flex; gap: 1px; padding: 8px 0 0 9px; height: 10px; }
.tbars i { width: 72px; height: 2px; }
.o, .s-bars .o { background: #e48312; }
.r, .s-bars .r { background: #bd582c; }
.k, .s-bars .k { background: #958255; }
.thead { margin: 2px 0 0 9px; width: 219px; height: 23px; background: #e48312; color: #fbe2c3; font-size: 6.800px; line-height: 10px; padding: 11px 0 0 4px; white-space: nowrap; }
.thead-sans { font-family: "Lato", sans-serif; font-size: 7px; }
.ttext { font-size: 4.300px; line-height: 6px; padding-left: 11px; padding-right: 4px; }
.ttext p { margin-bottom: 2px; position: relative; }
.ttext .li { padding-left: 6px; }
.ttext .li::before { content: ""; position: absolute; left: 0; top: 2px; width: 2px; height: 2px; background: #bd582c; }
.ttext .b { color: #222; font-weight: bold; }
.ttext b { color: #111; }
.tt8 { padding-top: 29px; }
.tt13 { padding-top: 10px; }
.th9 .pbox { position: absolute; top: 25px; height: 94px; width: 71px; background: #f5dbcf; font-size: 4.800px; line-height: 7px; padding: 17px 0 0 11px; color: #444; }
.pb1 { left: 34px; }
.pb2 { left: 138px; }
.pbox p { white-space: nowrap; }
.pbox .gap1, .pbox .gap2 { font-size: 5.800px; line-height: 6px; white-space: normal; width: 48px; }
.pbox .gap1 { margin: 0 0 6px; }
.pbox .gap2 { margin: 0 0 13px; }
.pbox .ty { font-size: 6px; text-decoration: underline; color: #222; line-height: 8px; }
.pbox .reg { text-decoration: underline; color: #222; }
.circ { position: absolute; border-radius: 50%; background: linear-gradient(#e8994a, #b96a0e); color: #fbe9d6; font-size: 4.600px; line-height: 5.500px; text-align: center; display: flex; align-items: center; justify-content: center; padding: 0 4px; }
.c1 { left: 8px; top: 12px; width: 35px; height: 33px; }
.c2 { left: 116px; top: 11px; width: 32px; height: 35px; }
.tt10 { padding: 3px 0 0 37px; }
.tt10h { font-size: 7px; line-height: 8px; height: 8px; color: #555; }
.bandwrap { margin: 2px 0 3px -2px; height: 30px; width: 170px; position: relative; }
.bandsvg { display: block; }
.bandbox { position: absolute; left: 1px; top: 5px; width: 157px; height: 20px; background: #fff; border: 1px solid #e48312; font-size: 4.100px; line-height: 6px; padding-left: 5px; white-space: nowrap; }
.acols { display: flex; gap: 4px; padding: 3px 0 0 6px; }
.acol { width: 42px; height: 72px; background: #f5dbcf; flex: none; font-size: 3.800px; line-height: 4.400px; color: #444; }
.acol ul { padding: 2px 2px 0 6px; }
.acol li { position: relative; }
.acol li::before { content: "•"; position: absolute; left: -4px; }
.ah { height: 17px; background: linear-gradient(#e8994a, #b96a0e); color: #fbe9d6; font-size: 5.500px; line-height: 6px; text-align: center; display: flex; align-items: center; justify-content: center; padding: 0 3px; }
.ah-lg { font-size: 7.500px; }
.ah-sm { font-size: 4.600px; }

/* scrollbars */
.sbar { width: 33px; flex: none; background: #dcdcdc; display: flex; flex-direction: column; }
.sb-btn { height: 31px; background: #fff; border: 1px solid #ababab; display: flex; align-items: center; justify-content: center; flex: none; }
.sb-thumb { background: #fff; border: 1px solid #ababab; flex: none; }
.sb-fill { flex: 1; }
.st-left { margin-top: 112px; height: 96px; }
.st-right { margin-top: 139px; height: 33px; }
.sb-up { border: 9px solid transparent; border-top: 0; border-bottom: 7px solid #777; }
.sb-dn { border: 9px solid transparent; border-bottom: 0; border-top: 7px solid #777; }
.sbar-left { margin-bottom: 2px; }
.sb-steps { height: 110px; flex: none; background: #e6e6e6; margin: 0 -1px; padding-top: 10px; display: flex; flex-direction: column; gap: 14px; align-items: center; }
.sb-step { display: flex; flex-direction: column; gap: 2px; }
.sb-up2 { border: 9px solid transparent; border-top: 0; border-bottom: 7px solid #777; }
.sb-dn2 { border: 9px solid transparent; border-bottom: 0; border-top: 7px solid #777; }

/* work area */
.work { flex: 1; display: flex; min-width: 0; }
.canvas { flex: 1; padding: 10px 0 0 136px; background: #e6e6e6; min-width: 0; }
.slide { width: 1868px; height: 1051px; background: #fff; border: 1px solid #d6d6d6; position: relative; overflow: hidden; }
.s-bars { display: flex; gap: 14px; padding: 70px 0 0 67px; height: 84px; }
.s-bars i { width: 568px; height: 14px; }
.s-head { margin: 10px 0 0 67px; width: 1732px; height: 182px; background: #e48312; display: flex; align-items: flex-end; padding: 0 0 22px 37px; }
.s-head h1 { font: normal 54.500px/60px "Liberation Serif", serif; color: #fbe2c3; white-space: nowrap; }
.mini .s-bars { padding: 71px 0 0 68px; height: 85px; }
.mini .s-head { margin-left: 68px; }
.pbtn { position: absolute; color: #fff3e2; font-family: "Lato", sans-serif; font-size: 30.500px; line-height: 34px; text-align: center; background: linear-gradient(#e8994a, #b96a0e); border-radius: 20px; display: flex; align-items: center; justify-content: center; box-shadow: 0 4px 5px rgba(70, 70, 70, .55); }
.p-train { left: 402px; top: 377px; width: 142px; height: 125px; padding: 0 22px 4px; }
.p-test { left: 718px; top: 600px; width: 173px; height: 108px; padding: 0 40px 5px; }
.barrow { position: absolute; left: 452px; top: 528px; filter: drop-shadow(0 3px 2px rgba(80, 80, 80, .5)); }
.blist { position: absolute; font: 46.700px/48px "Liberation Serif", serif; color: #111; white-space: nowrap; }
.blist li { padding-left: 33px; margin-bottom: 9px; position: relative; }
.blist li::before { content: ""; position: absolute; left: 0; top: 17px; width: 11px; height: 14px; border-radius: 50%; background: #111; }
.bl1 { left: 591px; top: 362px; }
.bl2 { left: 920px; top: 577px; }
.sq { text-decoration: underline wavy #d22; text-decoration-thickness: 1px; text-underline-offset: 5px; }
.slist { position: absolute; left: 106px; top: 741px; font: 35px/40px "Liberation Serif", serif; color: #333; white-space: nowrap; }
.slist li { padding-left: 44px; margin-bottom: 20px; position: relative; }
.slist li::before { content: ""; position: absolute; left: 0; top: 15px; width: 12px; height: 12px; background: #bd582c; }

/* status */
.status { height: 45px; flex: none; background: #f3f3f3; border-top: 2px solid #c6c6c6; border-bottom: 2px solid #333; display: flex; font-size: 20px; color: #444; position: relative; white-space: nowrap; }
.st-left-part { width: 1128px; flex: none; display: flex; align-items: center; padding: 2px 0 0 15px; }
.st-slide { width: 161px; }
.st-notes { flex: none; }
.st-lang { margin-left: 34px; width: 240px; }
.st-acc { flex: none; }
.st-acc-t { margin-left: 2px; }
.zoom-share { width: 514px; flex: none; background: #22d95e; margin: -1px 0 -2px; display: flex; align-items: center; padding-left: 15px; border-radius: 4px 0 0 0; }
.zs-text { margin-left: 60px; width: 329px; font-weight: bold; font-size: 23px; color: #1c1c3c; }
.zs-shield { margin-left: 19px; }
.zoom-stop { width: 179px; flex: none; background: #ff3d41; margin: -1px 0 -2px; display: flex; align-items: center; padding-left: 15px; color: #fff; font-size: 23px; gap: 12px; border-radius: 0 4px 0 0; }
.stop-sq { width: 15px; height: 16px; background: #fff; border-radius: 2px; }
.view-btn { height: 41px; display: flex; align-items: center; justify-content: center; flex: none; }
.view-cur { width: 80px; margin-left: 28px; background: #c6c6c6; }
.vb2 { width: 28px; margin-left: 27px; }
.vb3 { width: 28px; margin-left: 51px; }
.vb4 { width: 26px; margin-left: 53px; }
.zoomer { display: flex; align-items: center; margin-left: 41px; }
.zm-minus { width: 14px; height: 2px; background: #444; }
.zm-track { width: 198px; height: 4px; background: #333; margin: 0 8px 0 12px; position: relative; }
.zm-tick { position: absolute; left: 97px; top: -10px; width: 1px; height: 24px; background: #333; }
.zm-handle { position: absolute; left: 66px; top: -10px; width: 10px; height: 24px; background: #666; }
.zm-pct { margin-left: 26px; width: 72px; font-size: 22px; color: #444; }
```
